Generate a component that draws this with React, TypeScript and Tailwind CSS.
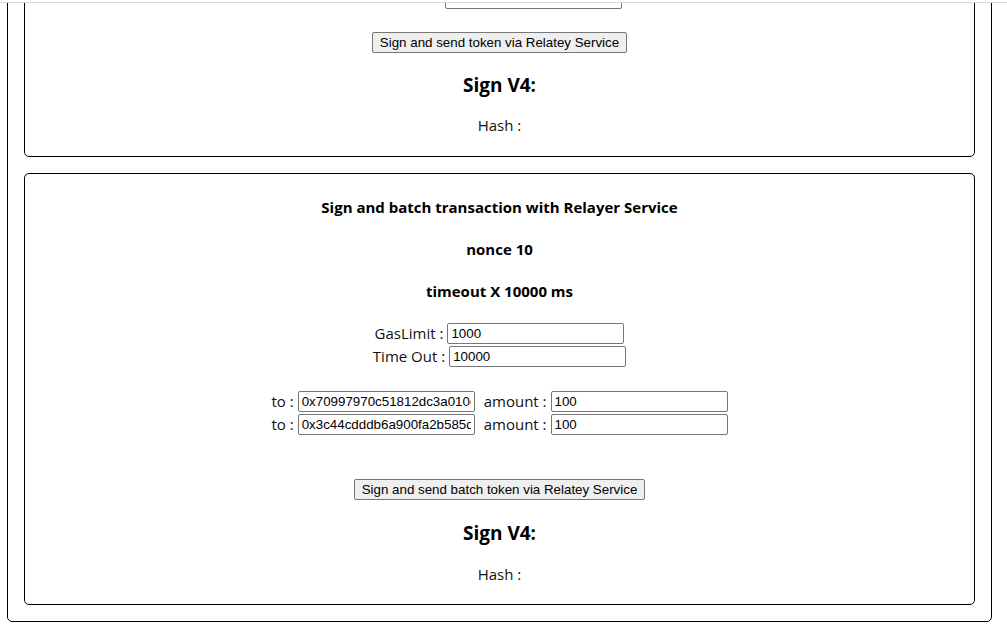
import React from "react";

const body = { fontFamily: '"Open Sans", "Noto Sans", sans-serif' };
const ctrl = { fontFamily: '"Liberation Sans", Arial, sans-serif' };

function Input({ value }: { value: string }) {
  return (
    <input
      readOnly
      value={value}
      style={ctrl}
      className="box-border block h-[21px] w-[177px] rounded-[2px] border border-[#767676] bg-white px-[3px] text-[13.33px] leading-[15px] text-black outline-none"
    />
  );
}

function Btn({ children }: { children: React.ReactNode }) {
  return (
    <button
      style={ctrl}
      className="box-border block h-[21px] rounded-[2px] border border-[#767676] bg-[#efefef] px-[7px] text-[13.33px] leading-[15px] text-black"
    >
      {children}
    </button>
  );
}

export default function App() {
  return (
    <div className="h-[625px] w-[1007px] overflow-hidden bg-white text-[#111]" style={body}>
      <div className="h-[2px] bg-white" />
      <div className="h-px bg-[#d8d8d8]" />
      <div className="h-[622px] overflow-hidden">
        <div className="-mt-[40px] ml-[7px] w-[985px] rounded-[5px] border border-black p-4">
          {/* first card (scrolled) */}
          <div className="mb-4 flex flex-col items-center rounded-[5px] border border-black pb-[20px] pt-[7px]">
            <div className="flex h-[21px] items-center">
              <span className="w-[68px]" />
              <Input value="" />
            </div>
            <div className="mt-[23px] flex h-[21px]">
              <Btn>Sign and send token via Relatey Service</Btn>
            </div>
            <div className="mt-[20px] h-[25px] text-[19px] font-bold leading-[25px] text-black">Sign V4:</div>
            <div className="mt-[17px] h-[21px] text-[15px] leading-[21px]">Hash :</div>
          </div>

          {/* second card */}
          <div className="flex flex-col items-center rounded-[5px] border border-black pb-[19px] pt-[23px]">
            <div className="h-[21px] text-[15px] font-bold leading-[21px] text-black">
              Sign and batch transaction with Relayer Service
            </div>
            <div className="mt-[21px] h-[21px] text-[15px] font-bold leading-[21px] text-black">nonce 10</div>
            <div className="mt-[21px] h-[21px] text-[15px] font-bold leading-[21px] text-black">timeout X 10000 ms</div>

            <div className="mt-[20px] flex h-[23px] items-center gap-[4px] text-[15px]">
              <span>GasLimit :</span>
              <Input value="1000" />
            </div>
            <div className="flex h-[23px] items-center gap-[4px] text-[15px]">
              <span>Time Out :</span>
              <Input value="10000" />
            </div>

            <div className="mt-[22px] flex h-[23px] items-center text-[15px]">
              <span className="mr-[4px]">to :</span>
              <Input value="0x70997970c51812dc3a010c7d01b50e0d17dc79c8" />
              <span className="ml-[9px] mr-[4px]">amount :</span>
              <Input value="100" />
            </div>
            <div className="flex h-[23px] items-center text-[15px]">
              <span className="mr-[4px]">to :</span>
              <Input value="0x3c44cdddb6a900fa2b585dd299e03d12fa4293bc" />
              <span className="ml-[9px] mr-[4px]">amount :</span>
              <Input value="100" />
            </div>

            <div className="mt-[43px] flex h-[21px]">
              <Btn>Sign and send batch token via Relatey Service</Btn>
            </div>
            <div className="mt-[21px] h-[25px] text-[19px] font-bold leading-[25px] text-black">Sign V4:</div>
            <div className="mt-[18px] h-[21px] text-[15px] leading-[21px]">Hash :</div>
          </div>
        </div>
      </div>
    </div>
  );
}
